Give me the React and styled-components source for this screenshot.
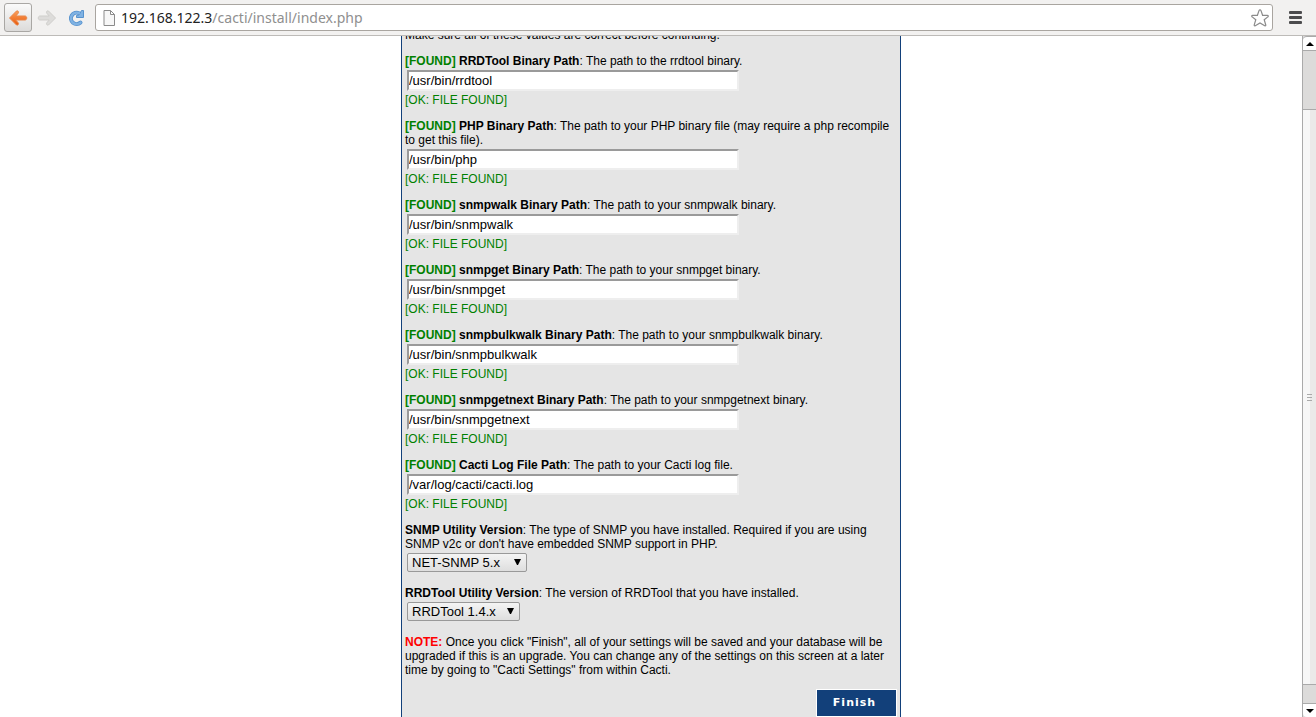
import React from "react";
import styled, { createGlobalStyle } from "styled-components";

const Global = createGlobalStyle`
  * { box-sizing: border-box; }
  body { margin: 0; background: #fff; color: #000; font: 12px/14px "Liberation Sans", Arial, sans-serif; }
`;

const Browser = styled.div`
  display: flex;
  flex-direction: column;
  height: 100vh;
  overflow: hidden;
`;

const Toolbar = styled.header`
  display: flex;
  align-items: center;
  gap: 1px;
  flex: none;
  height: 36px;
  padding: 0 6px 0 4px;
  background: #f2f1f0;
  border-bottom: 1px solid #bdbbb8;
`;

const ToolButton = styled.button`
  display: flex;
  align-items: center;
  justify-content: center;
  flex: none;
  width: 28px;
  height: 29px;
  padding: 0;
  border: 1px solid ${(p) => (p.$raised ? "#a9a7a4" : "transparent")};
  border-radius: 3px;
  background: ${(p) => (p.$raised ? "linear-gradient(#fafafa, #dcdbda)" : "none")};
`;

const AddressBar = styled.div`
  display: flex;
  align-items: center;
  flex: 1;
  height: 27px;
  margin: 0 8px 0 4px;
  padding: 0 3px 0 7px;
  background: #fff;
  border: 1px solid #a9a5a0;
  border-radius: 3px;
`;

const Address = styled.div`
  flex: 1;
  margin-left: 5px;
  color: #8f8f8f;
  font: 14px/20px "Noto Sans", sans-serif;
  white-space: nowrap;
`;

const Host = styled.span`
  color: #222;
`;

const StarButton = styled.button`
  display: flex;
  padding: 0;
  border: 0;
  background: none;
`;

const Viewport = styled.div`
  display: flex;
  flex: 1;
  min-height: 0;
`;

const Page = styled.main`
  flex: 1;
  display: flex;
  justify-content: center;
  overflow: hidden;
`;

const Panel = styled.form`
  flex: none;
  width: 500px;
  max-width: 100%;
  margin-top: -8px;
  padding: 0 3px 16px;
  background: #e5e5e5;
  border: 1px solid #12407a;
  border-width: 0 1px;
`;

const Paragraph = styled.p`
  margin: 0 0 12px;
`;

const Field = styled.div`
  margin-bottom: ${(p) => (p.$select ? 14 : 12)}px;
`;

const Label = styled.label`
  display: block;
`;

const Found = styled.b`
  color: #008000;
`;

const Status = styled.div`
  color: #008000;
`;

const PathInput = styled.input`
  display: block;
  width: 332px;
  height: 21px;
  margin: 2px;
  padding: 0;
  border: 2px solid;
  border-color: #9a9a9a #eee #eee #9a9a9a;
  background: #fff;
  color: #000;
  font: 13px/16px "Liberation Sans", Arial, sans-serif;
`;

const SelectBox = styled.div`
  position: relative;
  width: ${(p) => p.$width}px;
  margin: 2px;
`;

const Select = styled.select`
  appearance: none;
  display: block;
  width: 100%;
  height: 19px;
  padding: 0 4px;
  border: 1px solid #999;
  border-radius: 2px;
  background: linear-gradient(#f4f4f4, #dedede);
  color: #000;
  font: 13px/16px "Liberation Sans", Arial, sans-serif;
`;

const Arrow = styled.svg`
  position: absolute;
  top: 6px;
  right: 6px;
  pointer-events: none;
`;

const Note = styled.b`
  color: #f00;
`;

const Actions = styled.div`
  display: flex;
  justify-content: flex-end;
`;

const FinishButton = styled.button`
  width: 81px;
  height: 28px;
  padding: 0 4px 0 0;
  border: 1px solid #fff;
  background: #12407a;
  color: #fff;
  font: bold 11px/16px "DejaVu Sans", Verdana, sans-serif;
  letter-spacing: 1px;
`;

const Scrollbar = styled.div`
  display: flex;
  flex-direction: column;
  flex: none;
  width: 14px;
  border: 1px solid #aaa;
  border-width: 0 0 0 1px;
  background: #dcdbda;
`;

const ScrollButton = styled.button`
  display: flex;
  align-items: center;
  justify-content: center;
  flex: none;
  height: ${(p) => (p.$end ? 14 : 15)}px;
  padding: 0;
  border: 0 solid #aaa;
  border-width: ${(p) => (p.$end ? "1px 0 0" : "1px 0")};
  border-radius: ${(p) => (p.$end ? "0 0 0 4px" : "4px 0 0 0")};
  background: #fff;
`;

const Track = styled.div`
  display: flex;
  flex-direction: column;
  flex: 1;
  padding: 58px 0 18px;
`;

const Thumb = styled.div`
  display: flex;
  flex: 1;
  align-items: center;
  justify-content: center;
  border: 1px solid #aaa;
  border-width: 1px 0;
  background: linear-gradient(90deg, #f7f7f7 50%, #ebeae9 50%);
`;

const paths = [
  ["rrdtool", "RRDTool Binary Path", "The path to the rrdtool binary.", "/usr/bin/rrdtool"],
  ["php", "PHP Binary Path", "The path to your PHP binary file (may require a php recompile to get this file).", "/usr/bin/php"],
  ["snmpwalk", "snmpwalk Binary Path", "The path to your snmpwalk binary.", "/usr/bin/snmpwalk"],
  ["snmpget", "snmpget Binary Path", "The path to your snmpget binary.", "/usr/bin/snmpget"],
  ["snmpbulkwalk", "snmpbulkwalk Binary Path", "The path to your snmpbulkwalk binary.", "/usr/bin/snmpbulkwalk"],
  ["snmpgetnext", "snmpgetnext Binary Path", "The path to your snmpgetnext binary.", "/usr/bin/snmpgetnext"],
  ["log", "Cacti Log File Path", "The path to your Cacti log file.", "/var/log/cacti/cacti.log"],
];

const versions = [
  ["snmp", "SNMP Utility Version", "The type of SNMP you have installed. Required if you are using SNMP v2c or don't have embedded SNMP support in PHP.", "NET-SNMP 5.x", 120],
  ["rrd", "RRDTool Utility Version", "The version of RRDTool that you have installed.", "RRDTool 1.4.x", 113],
];

const ARROW_PATH =
  "M8.500 1 1.500 8l7 7c1.600.6 2.600-1 1.700-2.200L7.800 10H17c2.300 0 2.300-4 0-4H7.800l2.400-2.800C11.100 2 10.100.4 8.500 1z";

function PathField({ id, title, description, value }) {
  return (
    <Field>
      <Label htmlFor={id}>
        <Found>[FOUND]</Found> <b>{title}</b>: {description}
      </Label>
      <PathInput id={id} type="text" defaultValue={value} />
      <Status>[OK: FILE FOUND]</Status>
    </Field>
  );
}

function VersionField({ id, title, description, value, width }) {
  return (
    <Field $select>
      <Label htmlFor={id}>
        <b>{title}</b>: {description}
      </Label>
      <SelectBox $width={width}>
        <Select id={id} defaultValue={value}>
          <option>{value}</option>
        </Select>
        <Arrow width="7" height="6" viewBox="0 0 7 6">
          <path d="M0 0h7L4 6H3z" fill="#000" />
        </Arrow>
      </SelectBox>
    </Field>
  );
}

export default function App() {
  return (
    <Browser>
      <Global />
      <Toolbar>
        <ToolButton $raised aria-label="Back">
          <svg width="20" height="16" viewBox="0 0 20 16">
            <defs>
              <linearGradient id="orange" x2="0" y2="1">
                <stop stopColor="#fba05a" />
                <stop offset="1" stopColor="#e95a0c" />
              </linearGradient>
            </defs>
            <path d={ARROW_PATH} fill="url(#orange)" stroke="#e8864a" />
          </svg>
        </ToolButton>
        <ToolButton aria-label="Forward">
          <svg width="20" height="16" viewBox="0 0 20 16">
            <path d={ARROW_PATH} transform="matrix(-1 0 0 1 20 0)" fill="#dddcda" stroke="#cfcecb" />
          </svg>
        </ToolButton>
        <ToolButton aria-label="Reload">
          <svg width="18" height="18" viewBox="0 0 18 18" fill="none">
            <path d="M12 4.200A5.700 5.700 0 1 0 13.500 13.600" stroke="#5792cd" strokeWidth="4" strokeLinecap="round" />
            <path d="M16.500 1.500v7H9.500V6.500l2.500-.5 2.500-4.500z" fill="#7fb2e3" stroke="#5792cd" strokeLinejoin="round" />
            <path d="M12 4.200A5.700 5.700 0 1 0 13.500 13.600" stroke="#7fb2e3" strokeWidth="2.400" strokeLinecap="round" />
          </svg>
        </ToolButton>
        <AddressBar>
          <svg width="13" height="16" viewBox="0 0 13 16" fill="#f7f7f7" stroke="#8b8b8b">
            <path d="M1 .5h6.500L11.500 4.500v11H1zM7.500.5v4h4" />
          </svg>
          <Address>
            <Host>192.168.122.3</Host>/cacti/install/index.php
          </Address>
          <StarButton aria-label="Bookmark this page">
            <svg width="18" height="18" viewBox="0 0 18 18">
              <path
                d="M9 .8c.5 0 .8.3 1 .8l1.600 4.700h4.700c1.100 0 1.300 1 .5 1.600l-3.600 2.900 1.500 4.900c.3 1-.6 1.500-1.400.9L9 13.900l-4.300 2.700c-.8.6-1.700.1-1.400-.9l1.500-4.900L1.200 7.900C.4 7.300.6 6.300 1.700 6.300h4.700L8 1.600c.2-.5.5-.8 1-.8z"
                fill="#fff"
                stroke="#8b8b8b"
                strokeWidth="1.200"
              />
            </svg>
          </StarButton>
        </AddressBar>
        <ToolButton aria-label="Menu">
          <svg width="14" height="14" viewBox="0 0 14 14" fill="#4b4b4d">
            <rect width="13" height="3" rx="1" />
            <rect y="5" width="13" height="3" rx="1" />
            <rect y="10" width="13" height="3" rx="1" />
          </svg>
        </ToolButton>
      </Toolbar>
      <Viewport>
        <Page>
          <Panel>
            <Paragraph>Make sure all of these values are correct before continuing.</Paragraph>
            {paths.map(([id, title, description, value]) => (
              <PathField key={id} id={id} title={title} description={description} value={value} />
            ))}
            {versions.map(([id, title, description, value, width]) => (
              <VersionField key={id} id={id} title={title} description={description} value={value} width={width} />
            ))}
            <Paragraph>
              <Note>NOTE:</Note> Once you click "Finish", all of your settings will be saved and your database will be
              upgraded if this is an upgrade. You can change any of the settings on this screen at a later time by going
              to "Cacti Settings" from within Cacti.
            </Paragraph>
            <Actions>
              <FinishButton type="button">Finish</FinishButton>
            </Actions>
          </Panel>
        </Page>
        <Scrollbar>
          <ScrollButton aria-label="Scroll up">
            <svg width="8" height="4" viewBox="0 0 8 4">
              <path d="M0 4 4 0l4 4z" />
            </svg>
          </ScrollButton>
          <Track>
            <Thumb>
              <svg width="5" height="7" viewBox="0 0 5 7" fill="#aaa">
                <path d="M0 0h5v1H0zM0 3h5v1H0zM0 6h5v1H0z" />
              </svg>
            </Thumb>
          </Track>
          <ScrollButton $end aria-label="Scroll down">
            <svg width="8" height="4" viewBox="0 0 8 4">
              <path d="M0 0h8L4 4z" />
            </svg>
          </ScrollButton>
        </Scrollbar>
      </Viewport>
    </Browser>
  );
}
